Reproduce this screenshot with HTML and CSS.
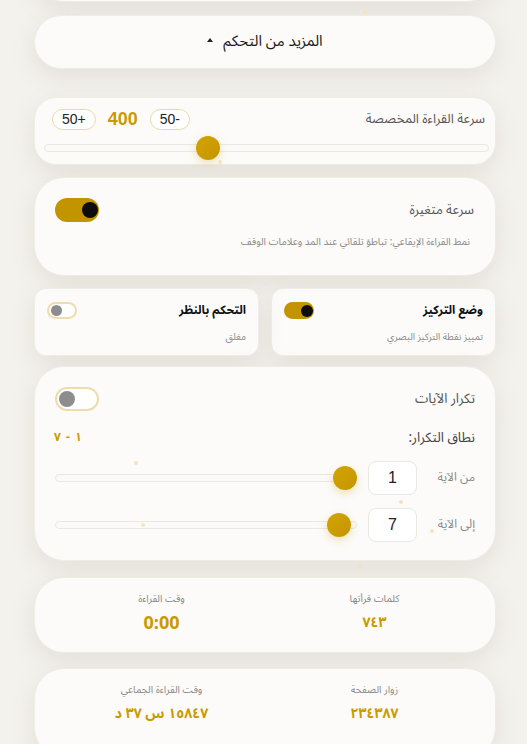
FILE: index.html
```html
<!DOCTYPE html>
<html lang="ar" dir="rtl">
<head>
<meta charset="utf-8">
<title>القراءة</title>
<link rel="stylesheet" href="styles.css">
</head>
<body>
<div class="dots">
  <span class="dot d1"></span><span class="dot d2"></span><span class="dot d3"></span>
  <span class="dot d4"></span><span class="dot d5"></span><span class="dot d6"></span>
  <span class="dot d7"></span>
</div>
<main class="page">
  <div class="card top-card"></div>

  <button class="card more">المزيد من التحكم <span class="tri"></span></button>

  <section class="card speed">
    <div class="speed-head">
      <span class="label">سرعة القراءة المخصصة</span>
      <div class="speed-ctrl">
        <span class="pill"><bdi class="pill-text">50-</bdi></span>
        <span class="speed-val">400</span>
        <span class="pill"><bdi class="pill-text">50+</bdi></span>
      </div>
    </div>
    <div class="slider speed-slider">
      <div class="track"></div>
      <div class="thumb" style="left: 152px"></div>
    </div>
  </section>

  <section class="card variable">
    <div class="row-between">
      <span class="label">سرعة متغيرة</span>
      <span class="toggle on big"><span class="knob"></span></span>
    </div>
    <p class="desc">نمط القراءة الإيقاعي: تباطؤ تلقائي عند المد وعلامات الوقف</p>
  </section>

  <div class="pair">
    <section class="card small">
      <div class="row-between">
        <span class="small-title">وضع التركيز</span>
        <span class="toggle on mini"><span class="knob"></span></span>
      </div>
      <p class="small-desc">تمييز نقطة التركيز البصري</p>
    </section>
    <section class="card small">
      <div class="row-between">
        <span class="small-title">التحكم بالنظر</span>
        <span class="toggle off mini"><span class="knob"></span></span>
      </div>
      <p class="small-desc">مغلق</p>
    </section>
  </div>

  <section class="card repeat">
    <div class="row-between">
      <span class="label big-label">تكرار الآيات</span>
      <span class="toggle off big"><span class="knob"></span></span>
    </div>
    <div class="row-between range-row">
      <span class="range-label">نطاق التكرار:</span>
      <span class="range-val">١ - ٧</span>
    </div>
    <div class="ayah-row">
      <span class="ayah-label">من الآية</span>
      <span class="num-box">1</span>
      <div class="slider ayah-slider">
        <div class="track"></div>
        <div class="thumb" style="left: 278px"></div>
      </div>
    </div>
    <div class="ayah-row">
      <span class="ayah-label">إلى الآية</span>
      <span class="num-box">7</span>
      <div class="slider ayah-slider">
        <div class="track"></div>
        <div class="thumb" style="left: 272px"></div>
      </div>
    </div>
  </section>

  <section class="card stats">
    <div class="stat">
      <span class="stat-label">كلمات قرأتها</span>
      <span class="stat-val">٧٤٣</span>
    </div>
    <div class="stat">
      <span class="stat-label">وقت القراءة</span>
      <span class="stat-val latin">0:00</span>
    </div>
  </section>

  <section class="card stats">
    <div class="stat">
      <span class="stat-label">زوار الصفحة</span>
      <span class="stat-val">٢٣٤٣٨٧</span>
    </div>
    <div class="stat">
      <span class="stat-label">وقت القراءة الجماعي</span>
      <span class="stat-val">١٥٨٤٧ س ٣٧ د</span>
    </div>
  </section>
</main>
</body>
</html>
```
FILE: styles.css
```css
* { box-sizing: border-box; }

html, body {
  margin: 0;
  padding: 0;
}

body {
  background: #f4f2ed;
  font-family: "Noto Sans Arabic", "Noto Sans Arabic UI", "Noto Sans", sans-serif;
  color: #333;
  line-height: 1.3;
  overflow: hidden;
  position: relative;
  height: 744px;
}

.page {
  display: flex;
  flex-direction: column;
  padding: 0 31px 0 34px;
}

.card {
  background: #fcfbf9;
  border: 1px solid #efece6;
  box-shadow: 0 8px 24px rgba(120, 110, 90, 0.13);
}

.top-card {
  height: 40px;
  margin-top: -38px;
  border-radius: 0 0 30px 30px;
}

.more {
  margin-top: 13px;
  height: 54px;
  border-radius: 27px;
  font-family: inherit;
  font-size: 15px;
  font-weight: 400;
  color: #1a1a1a;
  display: flex;
  align-items: center;
  justify-content: center;
  gap: 10px;
  padding: 0 0 2px;
}

.tri {
  width: 0;
  height: 0;
  border-left: 3.5px solid transparent;
  border-right: 3.5px solid transparent;
  border-bottom: 4px solid #222;
  position: relative;
  top: -1px;
}

.speed {
  margin-top: 28px;
  border-radius: 22px;
  padding: 11px 6px 4px 9px;
}

.speed-head {
  display: flex;
  justify-content: space-between;
  align-items: center;
  padding: 0 4px 0 8px;
  height: 21px;
}

.label {
  font-size: 13px;
  color: #555;
}

.big-label {
  font-size: 13.5px;
}

.speed-ctrl {
  display: flex;
  align-items: center;
  gap: 12px;
}

.pill {
  font-family: "Liberation Sans", sans-serif;
  font-size: 14px;
  color: #222;
  border: 1px solid #ead9a8;
  border-radius: 11px;
  height: 21px;
  padding: 0 9px;
  display: flex;
  align-items: center;
  background: #fff;
}

.pill-text {
  direction: ltr;
  unicode-bidi: isolate;
}

.speed-val {
  font-family: "Liberation Sans", sans-serif;
  font-weight: bold;
  font-size: 18px;
  color: #c99a00;
}

.slider {
  position: relative;
  direction: ltr;
  height: 24px;
  display: flex;
  align-items: center;
}

.speed-slider {
  margin-top: 6px;
}

.track {
  width: 100%;
  height: 8px;
  border: 1px solid #ebe8e2;
  border-radius: 4px;
  background: #fbfaf8;
}

.thumb {
  position: absolute;
  top: 0;
  width: 24px;
  height: 24px;
  border-radius: 50%;
  background: linear-gradient(135deg, #d2a400, #c49600);
  box-shadow: 0 3px 8px rgba(200, 160, 20, 0.3);
}

.variable {
  margin-top: 12px;
  border-radius: 30px;
  padding: 20px 20px 20px 20px;
  height: 99px;
}

.row-between {
  display: flex;
  justify-content: space-between;
  align-items: center;
}

.variable .label {
  margin-right: 1px;
}

.desc {
  margin: 13px 5px 0 0;
  font-size: 10px;
  color: #8a8a8a;
}

.toggle {
  position: relative;
  display: inline-block;
  border-radius: 14px;
  flex: none;
}

.toggle .knob {
  position: absolute;
  border-radius: 50%;
}

.toggle.on {
  background: #c29400;
}

.toggle.on .knob {
  background: #0d0d0d;
}

.toggle.off {
  background: #fff;
  border: 2px solid #ecdcae;
}

.toggle.off .knob {
  background: #8d8d8d;
}

.toggle.big {
  width: 44px;
  height: 24px;
}

.toggle.big.on .knob {
  width: 16px;
  height: 16px;
  top: 4px;
  right: 1.5px;
}

.toggle.big.off .knob {
  width: 16px;
  height: 16px;
  top: 2px;
  left: 2px;
}

.toggle.mini {
  width: 30px;
  height: 17px;
}

.toggle.mini.on .knob {
  width: 12px;
  height: 12px;
  top: 2.5px;
  right: 1.5px;
}

.toggle.mini.off .knob {
  width: 11px;
  height: 11px;
  top: 1px;
  left: 2px;
}

.pair {
  margin-top: 12px;
  display: grid;
  grid-template-columns: 1fr 1fr;
  gap: 12px;
}

.small {
  border-radius: 12px;
  height: 68px;
  padding: 13px 12px 0 12px;
}

.small-title {
  font-size: 12px;
  font-weight: 700;
  color: #111;
}

.small-desc {
  margin: 12px 0 0;
  font-size: 9.5px;
  color: #8a8a8a;
}

.repeat {
  margin-top: 10px;
  border-radius: 30px;
  padding: 20px 20px 18px 20px;
}

.range-row {
  margin-top: 17px;
  height: 20px;
}

.range-label {
  font-size: 13.5px;
  color: #444;
}

.range-val {
  font-size: 12px;
  font-weight: bold;
  color: #c99a00;
  word-spacing: 2px;
  margin-left: -1px;
}

.ayah-row {
  display: flex;
  align-items: center;
  margin-top: 13px;
}

.ayah-label {
  width: 60px;
  font-size: 12px;
  color: #888;
}

.num-box {
  width: 49px;
  height: 34px;
  border: 1px solid #ebe8e2;
  border-radius: 8px;
  background: #fff;
  display: flex;
  align-items: center;
  justify-content: center;
  font-family: "Liberation Sans", sans-serif;
  font-size: 16px;
  color: #222;
  flex: none;
}

.ayah-slider {
  flex: none;
  width: 302px;
  margin-right: 11px;
}

.stats {
  margin-top: 16px;
  border-radius: 30px;
  height: 76px;
  display: grid;
  grid-template-columns: 1fr 1fr;
  padding: 15px 14px 0 20px;
  align-items: start;
}

.stats + .stats {
  margin-top: 15px;
  height: 90px;
}

.stat {
  display: flex;
  flex-direction: column;
  align-items: center;
  gap: 8px;
}

.stat-label {
  font-size: 10px;
  line-height: 12px;
  color: #888;
}

.stat-val {
  font-size: 14px;
  line-height: 20px;
  font-weight: bold;
  color: #c99a00;
}

.stat-val.latin {
  font-size: 18px;
  line-height: 20px;
}

.dots {
  position: absolute;
  inset: 0;
  pointer-events: none;
  z-index: 2;
}

.dot {
  position: absolute;
  width: 4px;
  height: 4px;
  border-radius: 50%;
  background: #f2e4bf;
}

.d1 { left: 363px; top: 10px; }
.d2 { left: 218px; top: 160px; }
.d3 { left: 134px; top: 461px; }
.d4 { left: 399px; top: 500px; }
.d5 { left: 141px; top: 523px; }
.d6 { left: 430px; top: 529px; }
.d7 { left: 358px; top: 564px; }
```
